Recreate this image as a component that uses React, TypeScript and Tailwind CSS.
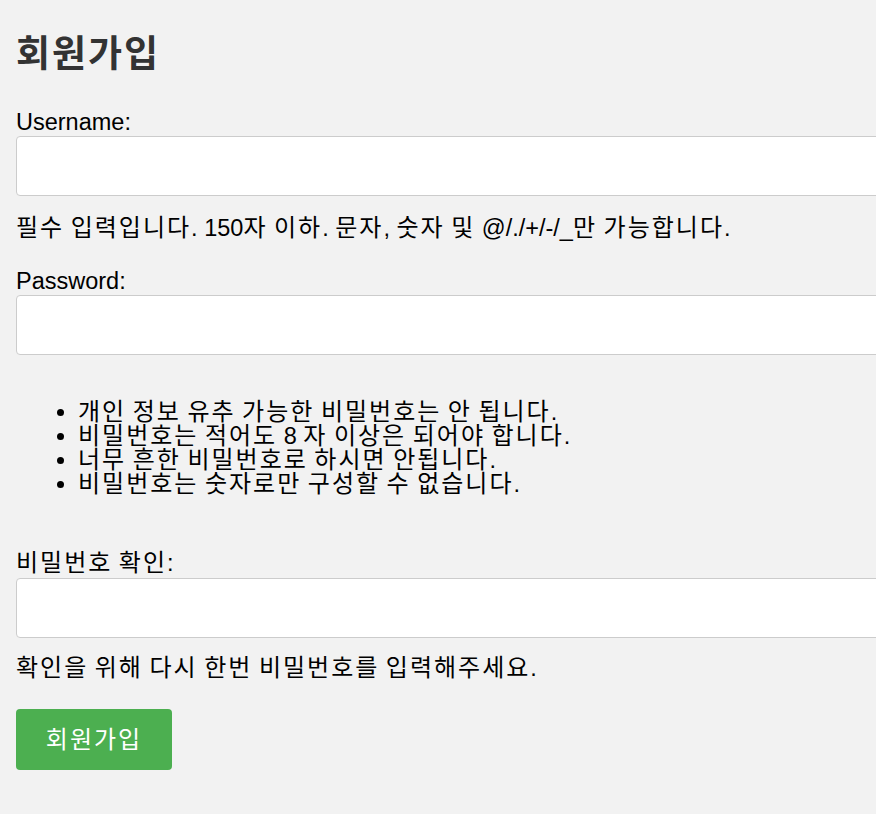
import React from "react";

const rules = [
  "개인 정보 유추 가능한 비밀번호는 안 됩니다.",
  "비밀번호는 적어도 8 자 이상은 되어야 합니다.",
  "너무 흔한 비밀번호로 하시면 안됩니다.",
  "비밀번호는 숫자로만 구성할 수 없습니다.",
];

// hangul runs get extra tracking so they match the wider korean face in the design
const K = ({ t }: { t: string }) => (
  <>
    {t.split(/([\uAC00-\uD7A3]+)/).map((s, i) =>
      /[\uAC00-\uD7A3]/.test(s) ? (
        <span key={i} className="text-[24px] leading-[0] tracking-[2px]">
          {s}
        </span>
      ) : (
        s
      )
    )}
  </>
);

const Field = ({ label, type }: { label: string; type: string }) => (
  <div className="flex flex-col">
    <label className="leading-[24px]">
      <K t={label} />
    </label>
    <input
      type={type}
      className="mt-[2px] h-[60px] w-[calc(100%+40px)] shrink-0 rounded border border-[#ccc] bg-white px-5 outline-none"
    />
  </div>
);

export default function App() {
  return (
    <div className="min-h-[814px] overflow-hidden bg-[#f2f2f2] px-4 text-[23.5px] text-black [font-family:'Liberation_Sans','Noto_Sans_CJK_KR',sans-serif]">
      <h2 className="pt-[36px] text-[37px] font-bold leading-[38px] tracking-[2px] text-[#333]">회원가입</h2>

      <form className="mt-[36px] flex flex-col">
        {/* Username */}
        <Field label="Username:" type="text" />
        <p className="mt-[20px] leading-[24px]">
          <K t="필수 입력입니다. 150자 이하. 문자, 숫자 및 @/./+/-/_만 가능합니다." />
        </p>

        {/* Password */}
        <div className="mt-[29px]">
          <Field label="Password:" type="password" />
        </div>
        <ul className="mt-[45px] list-disc pl-[62px] leading-[24px]">
          {rules.map((r) => (
            <li key={r}>
              <K t={r} />
            </li>
          ))}
        </ul>

        {/* Confirm */}
        <div className="mt-[55px] [&_input]:mt-[3px]">
          <Field label="비밀번호 확인:" type="password" />
        </div>
        <p className="mt-[18px] leading-[24px]">
          <K t="확인을 위해 다시 한번 비밀번호를 입력해주세요." />
        </p>

        <div className="mt-[29px]">
          <button
            type="submit"
            className="h-[61px] w-[156px] rounded bg-[#4caf50] text-[24px] leading-none text-white"
          >
            <K t="회원가입" />
          </button>
        </div>
      </form>
    </div>
  );
}
